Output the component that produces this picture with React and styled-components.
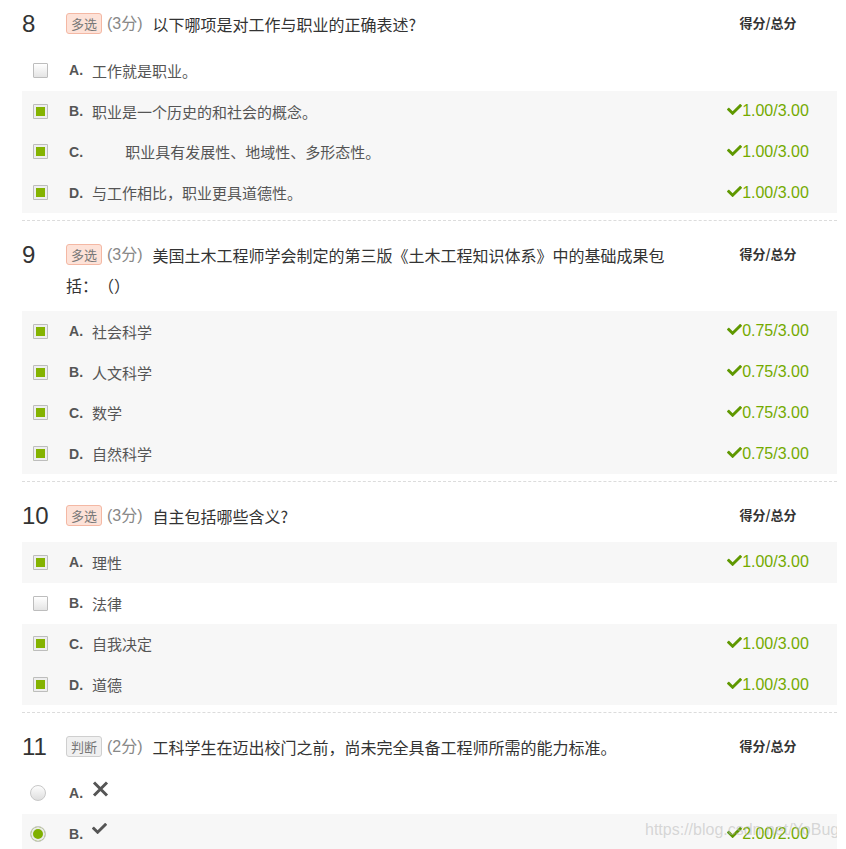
import React from "react";
import styled, { createGlobalStyle, css } from "styled-components";
import { FaCheck } from "react-icons/fa";

const GlobalStyle = createGlobalStyle`
	body {
		margin: 0;
		background: #fff;
		font-family: "Liberation Sans", Arial, "Noto Sans CJK SC", sans-serif;
		color: #333;
	}
`;

const questions = [
	{
		num: 8,
		type: "多选",
		points: 3,
		text: "以下哪项是对工作与职业的正确表述?",
		kind: "checkbox",
		options: [
			{ label: "A", text: "工作就是职业。" },
			{ label: "B", text: "职业是一个历史的和社会的概念。", checked: true, score: "1.00/3.00" },
			{ label: "C", text: "\u3000\u3000\u00a0职业具有发展性、地域性、多形态性。", checked: true, score: "1.00/3.00" },
			{ label: "D", text: "与工作相比，职业更具道德性。", checked: true, score: "1.00/3.00" },
		],
	},
	{
		num: 9,
		type: "多选",
		points: 3,
		text: "美国土木工程师学会制定的第三版《土木工程知识体系》中的基础成果包括：（）",
		kind: "checkbox",
		options: [
			{ label: "A", text: "社会科学", checked: true, score: "0.75/3.00" },
			{ label: "B", text: "人文科学", checked: true, score: "0.75/3.00" },
			{ label: "C", text: "数学", checked: true, score: "0.75/3.00" },
			{ label: "D", text: "自然科学", checked: true, score: "0.75/3.00" },
		],
	},
	{
		num: 10,
		type: "多选",
		points: 3,
		text: "自主包括哪些含义?",
		kind: "checkbox",
		options: [
			{ label: "A", text: "理性", checked: true, score: "1.00/3.00" },
			{ label: "B", text: "法律" },
			{ label: "C", text: "自我决定", checked: true, score: "1.00/3.00" },
			{ label: "D", text: "道德", checked: true, score: "1.00/3.00" },
		],
	},
	{
		num: 11,
		type: "判断",
		points: 2,
		text: "工科学生在迈出校门之前，尚未完全具备工程师所需的能力标准。",
		kind: "radio",
		options: [
			{ label: "A", icon: "wrong" },
			{ label: "B", icon: "right", checked: true, score: "2.00/2.00" },
		],
	},
];

const Page = styled.div`
	position: relative;
	width: 815px;
	padding-left: 22px;
	height: 849px;
	overflow: hidden;
`;

const Question = styled.section`
	padding-bottom: 7px;
	border-bottom: 1px dashed #dcdcdc;
`;

const Header = styled.div`
	display: flex;
	align-items: flex-start;
	padding: ${(p) => (p.$first ? "9px" : "19px")} 0 11px;
`;

const Num = styled.div`
	width: 44px;
	flex: none;
	height: 30px;
	font-size: 24px;
	line-height: 30px;
	color: #333;
`;

const Title = styled.div`
	flex: 1;
	padding-right: 47px;
	font-size: 16px;
	line-height: 30px;
	color: #333;
	font-family: "Noto Sans CJK SC", "Liberation Sans", sans-serif;
	text-spacing-trim: space-all;
	& > span {
		vertical-align: top;
	}
`;

const Badge = styled.span`
	display: inline-block;
	height: 19px;
	line-height: 19px;
	padding: 0 4px;
	margin: 4px 5px 0 0;
	font-size: 13px;
	color: #777;
	border-radius: 3px;
	${(p) =>
		p.$type === "判断"
			? css`
					background: #f0f0f0;
					border: 1px solid #cfcfcf;
			  `
			: css`
					background: #fde2d8;
					border: 1px solid #f4b8a4;
			  `}
`;

const Points = styled.span`
	color: #888;
	font-family: "Liberation Sans", "Noto Sans CJK SC", sans-serif;
	margin-right: 10px;
`;

const QText = styled.span``;

const ScoreCol = styled.div`
	width: 100px;
	flex: none;
	margin-right: 19px;
	text-align: center;
`;

const ScoreHead = styled(ScoreCol)`
	font-size: 13px;
	font-weight: bold;
	height: 30px;
	line-height: 28px;
	color: #333;
	font-family: "Noto Sans CJK SC", sans-serif;
`;

const Row = styled.div`
	display: flex;
	align-items: center;
	height: 40.75px;
	background: ${(p) => (p.$shaded ? "#f7f7f7" : "#fff")};
`;

const MarkerCell = styled.div`
	width: ${(p) => (p.$radio ? 39 : 36)}px;
	padding-left: ${(p) => (p.$radio ? 8 : 11)}px;
	flex: none;
	display: flex;
	align-items: center;
`;

const Checkbox = styled.span`
	width: 13px;
	height: 13px;
	border: 1px solid #bdbdbd;
	border-radius: 1px;
	${(p) =>
		p.$checked
			? css`
					background: #84b300;
					box-shadow: inset 0 0 0 2px #eee;
			  `
			: css`
					background: linear-gradient(#fff, #e4e4e4);
			  `}
`;

const Radio = styled.span`
	width: 14px;
	height: 14px;
	border: 1px solid #c8c8c8;
	border-radius: 50%;
	background: linear-gradient(#fdfdfd, #dedede);
	${(p) =>
		p.$checked &&
		css`
			background: #7fb000;
			box-shadow: inset 0 0 0 2px #eaeaea;
		`}
`;

const Label = styled.span`
	width: 23px;
	flex: none;
	font-size: 14px;
	font-weight: bold;
	color: #555;
`;

const OptText = styled.span`
	flex: 1;
	font-size: 15px;
	color: #555;
	white-space: pre;
	font-family: "Noto Sans CJK SC", "Liberation Sans", sans-serif;
`;

const Judge = styled.span`
	flex: 1;
	display: flex;
	align-items: center;
	color: #555;
	margin-top: ${(p) => (p.$wrong ? -9 : -11)}px;
`;

const Score = styled(ScoreCol)`
	display: flex;
	align-items: center;
	justify-content: center;
	font-size: 16px;
	color: #74aa00;
	svg {
		color: #5f9800;
		margin-top: -3px;
	}
`;

const Watermark = styled.div`
	position: absolute;
	left: 645px;
	top: 821px;
	font-size: 16px;
	color: rgba(185, 185, 185, 0.55);
	pointer-events: none;
	white-space: nowrap;
`;

const Cross = () => (
	<svg width="17" height="16" viewBox="0 0 17 16">
		<path d="M2 1.5 L15 14.5 M15 1.5 L2 14.5" stroke="#555" strokeWidth="3" />
	</svg>
);

const QuestionBlock = ({ q, first }) => (
	<Question>
		<Header $first={first}>
			<Num>{q.num}</Num>
			<Title>
				<Badge $type={q.type}>{q.type}</Badge>
				<Points>({q.points}分)</Points>
				<QText>{q.text}</QText>
			</Title>
			<ScoreHead>得分/总分</ScoreHead>
		</Header>
		{q.options.map((o) => (
			<Row key={o.label} $shaded={o.checked}>
				<MarkerCell $radio={q.kind === "radio"}>
					{q.kind === "radio" ? <Radio $checked={o.checked} /> : <Checkbox $checked={o.checked} />}
				</MarkerCell>
				<Label>{o.label}.</Label>
				{o.icon ? (
					<Judge $wrong={o.icon === "wrong"}>
						{o.icon === "wrong" ? <Cross /> : <FaCheck size={15} />}
					</Judge>
				) : (
					<OptText>{o.text}</OptText>
				)}
				{o.score && (
					<Score>
						<FaCheck size={15} />
						{o.score}
					</Score>
				)}
			</Row>
		))}
	</Question>
);

export default function App() {
	return (
		<>
			<GlobalStyle />
			<Page>
				{questions.map((q, i) => (
					<QuestionBlock key={q.num} q={q} first={i === 0} />
				))}
				<Watermark>https://blog.csdn.net/YoBug</Watermark>
			</Page>
		</>
	);
}
